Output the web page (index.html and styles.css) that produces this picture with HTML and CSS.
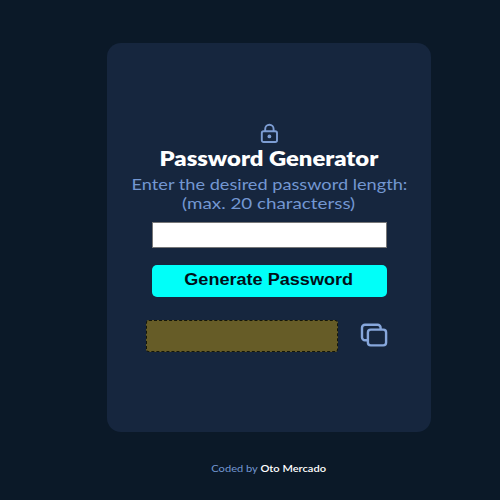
FILE: index.html
```html
<!DOCTYPE html>
<html lang="en">
<head>
<meta charset="utf-8">
<title>Password Generator</title>
<link rel="stylesheet" href="styles.css">
</head>
<body>
<main class="card">
  <svg class="lock" viewBox="0 0 18 20" fill="none" stroke="currentColor" stroke-width="1.9">
    <rect x="1.8" y="8.3" width="15.2" height="10.7" rx="1.8"/>
    <path d="M5.2 8.3V6a4.2 4.2 0 0 1 8.4 0v2.3"/>
    <circle cx="9.4" cy="13.4" r="1.9" fill="currentColor" stroke="none"/>
  </svg>
  <h1 class="title"><span>Password Generator</span></h1>
  <label class="prompt" for="length"><span class="line-one">Enter the desired password length:</span><span class="line-two">(max. 20 characterss)</span></label>
  <input class="length" id="length" type="text">
  <button class="generate" type="button"><span>Generate Password</span></button>
  <div class="result">
    <div class="output"></div>
    <svg class="copy" viewBox="0 0 28 24" fill="none" stroke="currentColor" stroke-width="2.4">
      <path d="M7.6 17.2H5a3 3 0 0 1-3-3V4.7a3 3 0 0 1 3-3h12.6a3 3 0 0 1 3 3v1.8"/>
      <rect x="7.9" y="6.6" width="18.2" height="15.8" rx="2.8"/>
    </svg>
  </div>
</main>
<footer class="credit"><span>Coded by <b>Oto Mercado</b></span></footer>
</body>
</html>
```
FILE: styles.css
```css
* { box-sizing: border-box; }
body {
  margin: 0;
  height: 500px;
  overflow: hidden;
  padding: 43px 0 0 107px;
  background: #0b1928;
  color: #7397d2;
  font-family: Lato, "Open Sans", sans-serif;
}
.card {
  width: 324px;
  height: 389px;
  padding-top: 80px;
  border-radius: 14px;
  background: #16263e;
  display: flex;
  flex-direction: column;
  align-items: center;
}
.lock { width: 18px; height: 20px; flex: none; color: #7d9dd3; }
.title, .prompt, .credit { white-space: nowrap; text-align: center; }
.title span, .prompt span, .generate span, .credit span { display: inline-block; }
.title {
  margin: 2px 0 0;
  height: 26px;
  line-height: 26px;
  font-size: 20px;
  font-weight: 800;
  color: #fff;
}
.title span { transform: scaleX(1.19); }
.prompt {
  margin-top: 3px;
  display: flex;
  flex-direction: column;
  align-items: center;
  font-size: 16px;
  line-height: 19px;
}
.line-one { transform: scaleX(1.135); }
.line-two { transform: scaleX(1.175); }
.length {
  width: 235px;
  height: 26px;
  flex: none;
  margin: 10px 0 0;
  padding: 0;
  border: 1px solid #777;
  background: #fff;
}
.generate {
  width: 235px;
  height: 32px;
  flex: none;
  margin: 17px 0 0;
  padding: 0 0 2px;
  border: 0;
  border-radius: 5px;
  background: #00fff9;
  color: #001018;
  font: bold 16px "Liberation Sans", Arial, sans-serif;
}
.generate span { transform: scaleX(1.13); }
.result {
  width: 242px;
  margin: 23px 0 0 -4px;
  display: flex;
  align-items: center;
  justify-content: space-between;
}
.output {
  width: 192px;
  height: 32px;
  border: 1px dashed #141609;
  border-radius: 3px;
  background: #665c27;
}
.copy { width: 28px; height: 24px; margin-bottom: 3px; color: #87a7dc; }
.credit {
  width: 324px;
  margin-top: 29px;
  font-size: 10px;
  line-height: 14px;
}
.credit span { transform: scaleX(1.11); }
.credit b { color: #fff; font-weight: 600; }
```
